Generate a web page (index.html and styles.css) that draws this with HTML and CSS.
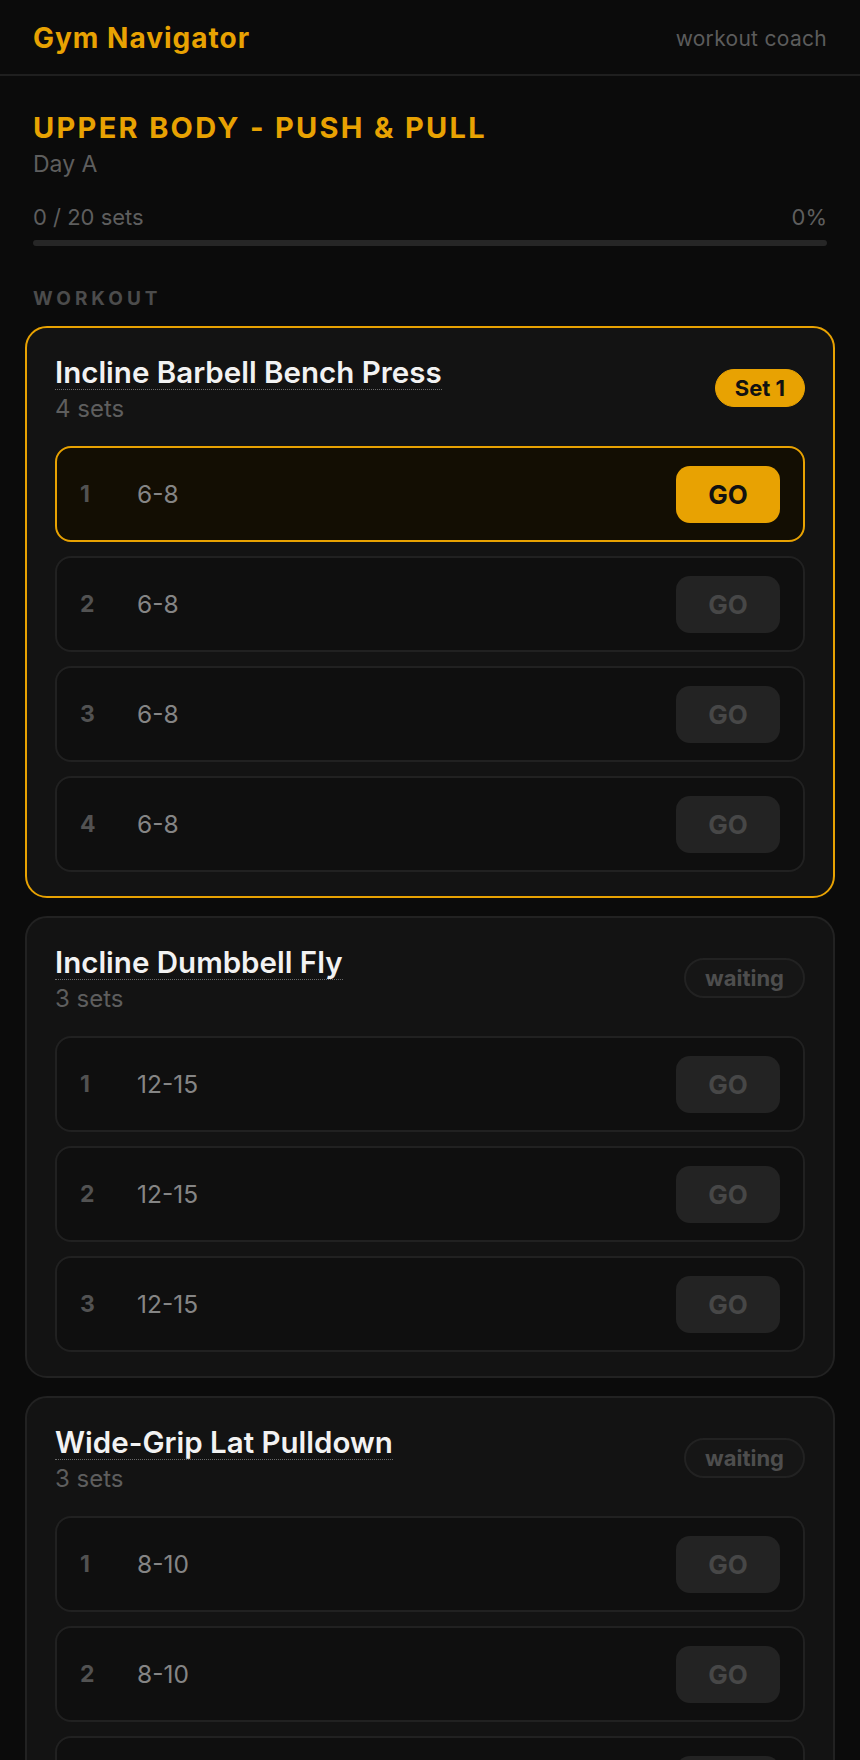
FILE: index.html
```html
<!DOCTYPE html>
<html lang="en">
<head>
    <meta charset="UTF-8">
    <meta name="viewport" content="width=device-width, initial-scale=1.0">
    <title>Gym Navigator</title>
    <link rel="stylesheet" href="styles.css">
</head>
<body>

    <header class="topbar">
        <div class="brand">Gym Navigator</div>
        <div class="tagline">workout coach</div>
    </header>

    <main class="page">
        <h1 class="day-title">UPPER BODY - PUSH &amp; PULL</h1>
        <div class="day-sub">Day A</div>

        <div class="progress-info">
            <span>0 / 20 sets</span>
            <span>0%</span>
        </div>
        <div class="progress-bar"><div class="progress-fill" style="width: 0%"></div></div>

        <div class="section-label">WORKOUT</div>

        <!-- текущее упражнение -->
        <section class="card active">
            <div class="card-head">
                <div>
                    <span class="ex-name">Incline Barbell Bench Press</span>
                    <div class="ex-sets">4 sets</div>
                </div>
                <span class="badge badge-current">Set 1</span>
            </div>
            <div class="set-row current">
                <span class="set-num">1</span>
                <span class="set-reps">6-8</span>
                <button class="go-btn">GO</button>
            </div>
            <div class="set-row">
                <span class="set-num">2</span>
                <span class="set-reps">6-8</span>
                <button class="go-btn">GO</button>
            </div>
            <div class="set-row">
                <span class="set-num">3</span>
                <span class="set-reps">6-8</span>
                <button class="go-btn">GO</button>
            </div>
            <div class="set-row">
                <span class="set-num">4</span>
                <span class="set-reps">6-8</span>
                <button class="go-btn">GO</button>
            </div>
        </section>

        <section class="card">
            <div class="card-head">
                <div>
                    <span class="ex-name">Incline Dumbbell Fly</span>
                    <div class="ex-sets">3 sets</div>
                </div>
                <span class="badge badge-wait">waiting</span>
            </div>
            <div class="set-row">
                <span class="set-num">1</span>
                <span class="set-reps">12-15</span>
                <button class="go-btn">GO</button>
            </div>
            <div class="set-row">
                <span class="set-num">2</span>
                <span class="set-reps">12-15</span>
                <button class="go-btn">GO</button>
            </div>
            <div class="set-row">
                <span class="set-num">3</span>
                <span class="set-reps">12-15</span>
                <button class="go-btn">GO</button>
            </div>
        </section>

        <section class="card">
            <div class="card-head">
                <div>
                    <span class="ex-name">Wide-Grip Lat Pulldown</span>
                    <div class="ex-sets">3 sets</div>
                </div>
                <span class="badge badge-wait">waiting</span>
            </div>
            <div class="set-row">
                <span class="set-num">1</span>
                <span class="set-reps">8-10</span>
                <button class="go-btn">GO</button>
            </div>
            <div class="set-row">
                <span class="set-num">2</span>
                <span class="set-reps">8-10</span>
                <button class="go-btn">GO</button>
            </div>
            <div class="set-row">
                <span class="set-num">3</span>
                <span class="set-reps">8-10</span>
                <button class="go-btn">GO</button>
            </div>
        </section>
    </main>

</body>
</html>
```

FILE: styles.css
```css
body {
    margin: 0;
    background-color: #0b0b0b;
    color: #e8e8e8;
    font-family: Inter, "Noto Sans", sans-serif;
}
.topbar {
    height: 74px;
    padding: 0 33px;
    display: flex;
    align-items: center;
    justify-content: space-between;
    border-bottom: 2px solid #1f1f1f;
}
.brand {
    color: #e8a202;
    font-size: 28px;
    font-weight: 700;
    letter-spacing: 1px;
    padding-top: 2px;
}
.tagline {
    color: #5c5c5c;
    font-size: 21px;
    letter-spacing: 0.3px;
    padding-top: 3px;
}
.page {
    padding: 35px 33px 40px;
}
.day-title {
    margin: 0;
    color: #e8a202;
    font-size: 29px;
    line-height: 34px;
    font-weight: 700;
    letter-spacing: 2.3px;
}
.day-sub {
    margin-top: 5px;
    color: #5e5e5e;
    font-size: 23px;
    line-height: 28px;
}
.progress-info {
    margin-top: 25px;
    display: flex;
    justify-content: space-between;
    color: #5e5e5e;
    font-size: 22px;
    line-height: 28px;
}
.progress-bar {
    margin-top: 9px;
    height: 6px;
    border-radius: 3px;
    background-color: #262626;
}
.progress-fill {
    height: 100%;
    border-radius: 3px;
    background-color: #e8a202;
}
.section-label {
    margin-top: 41px;
    color: #4c4c4c;
    font-size: 19px;
    line-height: 24px;
    font-weight: 700;
    letter-spacing: 4px;
}
.card {
    margin: 15px -8px 0;
    padding: 28px 28px 24px;
    background-color: #131313;
    border: 2px solid #222;
    border-radius: 22px;
}
.card + .card {
    margin-top: 18px;
}
.card.active {
    border-color: #e8a202;
}
.card-head {
    display: flex;
    justify-content: space-between;
    align-items: flex-start;
    margin-bottom: 23px;
}
.ex-name {
    display: inline-block;
    color: #f2f2f2;
    font-size: 29.5px;
    line-height: 33px;
    font-weight: 600;
    border-bottom: 1px dotted #6a6a6a;
}
.ex-sets {
    margin-top: 5px;
    color: #5e5e5e;
    font-size: 24px;
    line-height: 28px;
}
.badge {
    margin-top: 13px;
    padding: 0 19px;
    height: 38px;
    line-height: 36px;
    box-sizing: border-box;
    border-radius: 19px;
    font-size: 22px;
    font-weight: 700;
}
.badge-current {
    background-color: #e8a202;
    border: 1px solid #e8a202;
    color: #111;
}
.badge-wait {
    margin-top: 12px;
    padding: 0 19px;
    height: 40px;
    border-radius: 20px;
    background-color: #161616;
    border: 2px solid #222;
    color: #4e4e4e;
}
.set-row {
    height: 96px;
    box-sizing: border-box;
    padding: 0 23px;
    display: flex;
    align-items: center;
    background-color: #0f0f0f;
    border: 2px solid #212121;
    border-radius: 16px;
}
.set-row + .set-row {
    margin-top: 14px;
}
.set-row.current {
    background-color: #130e03;
    border-color: #e8a202;
}
.set-num {
    width: 57px;
    color: #525252;
    font-size: 23px;
    font-weight: 700;
}
.set-reps {
    flex: 1;
    color: #858585;
    font-size: 24.5px;
}
.go-btn {
    width: 104px;
    height: 57px;
    border: none;
    border-radius: 14px;
    background-color: #232323;
    color: #474747;
    font-family: inherit;
    font-size: 26px;
    font-weight: 700;
    cursor: pointer;
}
.set-row.current .go-btn {
    background-color: #e8a202;
    color: #111;
}
```
